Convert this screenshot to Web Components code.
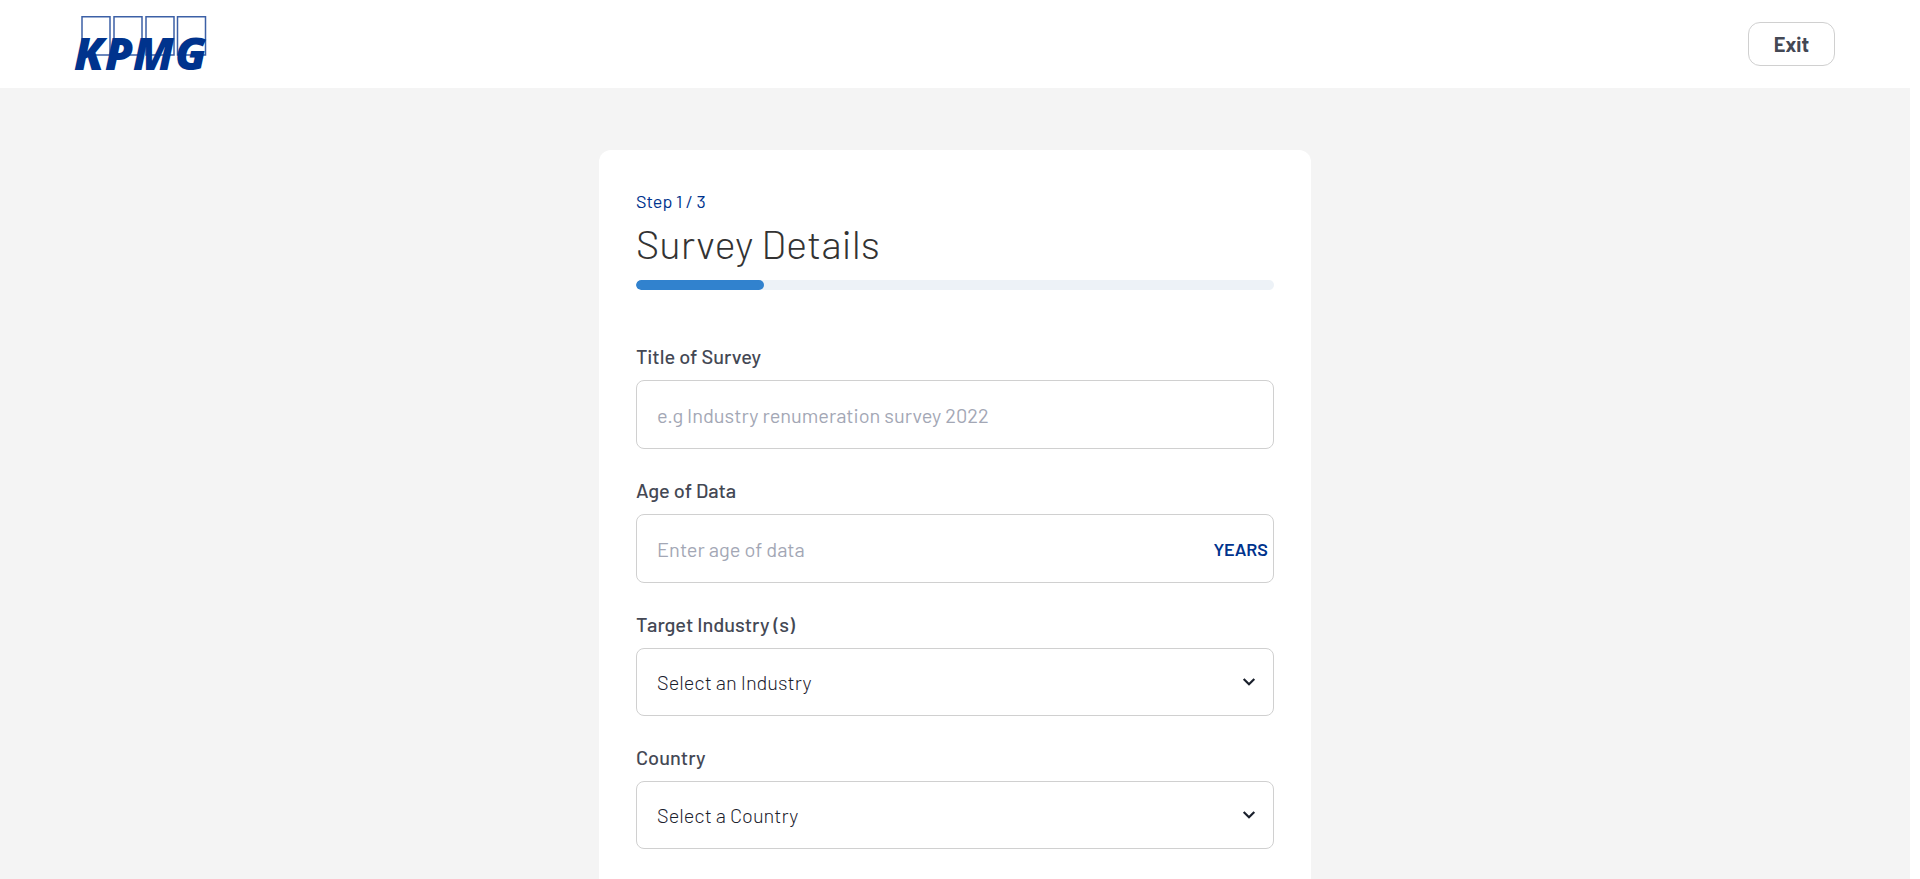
<!DOCTYPE html>
<html lang="en">
<head>
<meta charset="utf-8">
<title>Survey Details</title>
<style>
  body { margin: 0; background: #fff; font-family: Barlow, Roboto, "Liberation Sans", sans-serif; color: #444854; }
</style>
</head>
<body>
<survey-page>
  <survey-header slot="header"></survey-header>
  <survey-card>
    <step-heading step="Step 1 / 3" heading="Survey Details" value="20"></step-heading>
    <text-field label="Title of Survey" placeholder="e.g Industry renumeration survey 2022"></text-field>
    <text-field label="Age of Data" placeholder="Enter age of data" suffix="YEARS"></text-field>
    <select-field label="Target Industry (s)" placeholder="Select an Industry"></select-field>
    <select-field label="Country" placeholder="Select a Country"></select-field>
  </survey-card>
</survey-page>
<script>
  class Base extends HTMLElement {
    connectedCallback() {
      if (this.shadowRoot) return;
      this.attachShadow({ mode: 'open' }).innerHTML =
        '<style>:host,*{box-sizing:border-box}' + this.css() + '</style>' + this.html();
    }
    attr(name) { return this.getAttribute(name) || ''; }
  }

  customElements.define('survey-page', class extends Base {
    css() { return `
      :host { display: flex; flex-direction: column; min-height: 100vh; margin-right: 10px; background: #f4f4f4; }
      main { flex: 1; display: flex; justify-content: center; padding-top: 62px; }`; }
    html() { return `<slot name="header"></slot><main><slot></slot></main>`; }
  });

  customElements.define('survey-header', class extends Base {
    css() { return `
      :host { display: flex; align-items: center; justify-content: space-between; height: 88px; padding: 0 75px; background: #fff; }
      button { height: 44px; padding: 0 25px; border: 1px solid #d0d0d0; border-radius: 12px; background: #fff;
        font: 700 20px/24px Barlow, Roboto, sans-serif; color: #444854; }`; }
    html() { return `<kpmg-logo></kpmg-logo><button type="button">Exit</button>`; }
  });

  customElements.define('kpmg-logo', class extends Base {
    css() { return `
      :host { display: block; }
      svg { display: block; overflow: visible; }
      text { font: italic 800 45px "Open Sans", "Noto Sans", sans-serif; fill: #00338d; }`; }
    html() { return `
      <svg width="132" height="56" viewBox="0 0 132 56" role="img" aria-label="KPMG">
        <g fill="#fff" stroke="#3c60a6" stroke-width="1.5">
          <path d="M7 .7h28v38.3H7zM39 .7h28v38.3H39zM71 .7h28v38.3H71zM102.500 .7h28v38.3h-28z"/>
        </g>
        <text x="-1" y="54">K</text><text x="30" y="54">P</text><text x="58" y="54">M</text><text x="100" y="54">G</text>
      </svg>`; }
  });

  customElements.define('survey-card', class extends Base {
    css() { return `
      :host { display: flex; flex-direction: column; gap: 29px; width: 100%; max-width: 712px;
        padding: 40px 37px 30px; background: #fff; border-radius: 12px 12px 0 0; }`; }
    html() { return `<slot></slot>`; }
  });

  customElements.define('step-heading', class extends Base {
    css() { return `
      :host { display: block; margin-bottom: 25px; }
      p { margin: 0; font-size: 18px; line-height: 22px; color: #00338d; }
      h1 { margin: 6px 0 12px; font-weight: 300; font-size: 40px; line-height: 50px; color: #333; }
      .track { height: 10px; border-radius: 5px; background: #edf2f7; overflow: hidden; }
      .bar { height: 100%; border-radius: 5px; background: #3182ce; }`; }
    html() { const v = this.attr('value'); return `<p>${this.attr('step')}</p><h1>${this.attr('heading')}</h1>
      <div class="track" role="progressbar" aria-label="Progress" aria-valuenow="${v}" aria-valuemin="0" aria-valuemax="100"><div class="bar" style="width:${v}%"></div></div>`; }
  });

  const fieldCss = `
    :host { display: flex; flex-direction: column; gap: 12px; }
    label { font-weight: 500; font-size: 20px; line-height: 24px; color: #444854; }
    .box { display: flex; align-items: center; position: relative; }
    input, select { width: 100%; margin: 0; padding: 0 20px; border: 1px solid #d0d0d0; border-radius: 8px;
      background: #fff; font: 400 20px/24px Barlow, Roboto, sans-serif; outline-color: #3182ce; }`;

  customElements.define('text-field', class extends Base {
    css() { return fieldCss + `
      input { height: 69px; color: #1a202c; }
      input::placeholder { color: #a3a7b5; opacity: 1; }
      span { position: absolute; right: 6px; font-weight: 600; font-size: 18px; line-height: 24px; color: #00338d; }`; }
    html() { const s = this.attr('suffix'); return `<label for="f">${this.attr('label')}</label>
      <div class="box"><input id="f" type="text" placeholder="${this.attr('placeholder')}">${s ? `<span>${s}</span>` : ''}</div>`; }
  });

  customElements.define('select-field', class extends Base {
    css() { return fieldCss + `
      select { height: 68px; appearance: none; color: #1a202c; font-weight: 300; }
      svg { position: absolute; right: 18px; pointer-events: none; }`; }
    html() { return `<label for="f">${this.attr('label')}</label>
      <div class="box"><select id="f"><option>${this.attr('placeholder')}</option></select>
      <svg width="14" height="10" viewBox="0 0 14 10" aria-hidden="true"><path d="M1.700 2L7 7.300 12.300 2" fill="none" stroke="#1a202c" stroke-width="2.200"/></svg></div>`; }
  });
</script>
</body>
</html>
